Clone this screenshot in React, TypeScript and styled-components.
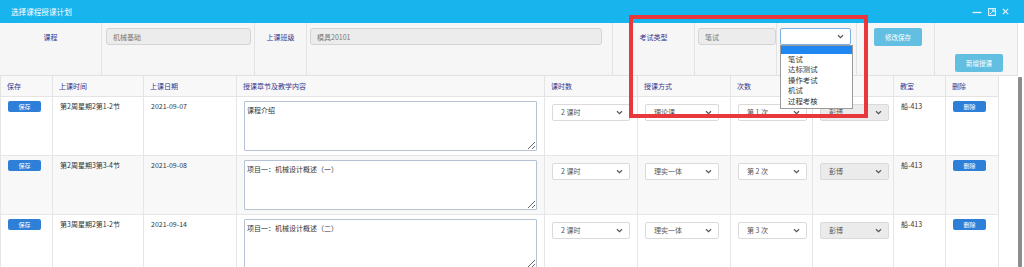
import React from 'react';
import styled, { createGlobalStyle } from 'styled-components';

const Global = createGlobalStyle`
  html, body { margin: 0; padding: 0; background: #fff; }
  body { font-family: "Noto Sans CJK SC", "Noto Sans", sans-serif; }
  * { box-sizing: border-box; }
`;

const Window = styled.div`
  position: relative;
  width: 1024px;
  height: 267px;
  overflow: hidden;
  background: #fff;
  display: flex;
  flex-direction: column;
`;

const TitleBar = styled.div`
  flex: none;
  height: 23px;
  background: #18b4ee;
  color: #fff;
  display: flex;
  align-items: center;
  justify-content: space-between;
  padding: 0 15px 0 11px;
  font-size: 7.6px;
`;

const Controls = styled.div`
  display: flex;
  align-items: center;
  gap: 6px;
`;

const Body = styled.div`
  flex: 1;
  display: flex;
  min-height: 0;
`;

const Main = styled.div`
  width: 1018px;
  display: flex;
  flex-direction: column;
`;

const ScrollCol = styled.div`
  flex: 1;
  display: flex;
  flex-direction: column;
  padding: 54px 2px 0 0;
`;

const Thumb = styled.div`
  flex: 1;
  background: #8c8c8c;
  border-radius: 1px;
`;

const Form = styled.div`
  display: grid;
  grid-template-columns: 102px 153px 52px 306px 82px 82px 80px 78px 1fr;
  grid-template-rows: 27px 25px;
  background: #f6f6f6;
  border-bottom: 1px solid #e1e1e1;
`;

const FormCell = styled.div<{ $pad?: string; $center?: boolean }>`
  position: relative;
  display: flex;
  align-items: center;
  justify-content: ${p => (p.$center ? 'center' : 'flex-start')};
  padding: ${p => p.$pad || '0'};
  border-right: 1px solid #e3e3e3;
`;

const Label = styled.span`
  font-size: 7px;
  color: #35358c;
`;

const ReadInput = styled.div`
  width: 100%;
  height: 17px;
  display: flex;
  align-items: center;
  padding-left: 6px;
  background: #ececec;
  border: 1px solid #d4d4d4;
  border-radius: 3px;
  font-size: 7px;
  color: #777;
`;

const FocusSelect = styled.div`
  position: relative;
  width: 100%;
  height: 17px;
  display: flex;
  align-items: center;
  justify-content: flex-end;
  padding-right: 6px;
  background: #fff;
  border: 1px solid #7eaedf;
  border-radius: 2px;
`;

const DropList = styled.ul`
  position: absolute;
  top: 16px;
  left: -1px;
  width: 73px;
  margin: 0;
  padding: 0 0 2px;
  list-style: none;
  background: #fff;
  border: 1px solid #9a9a9a;
  z-index: 5;
`;

const DropItem = styled.li<{ $active?: boolean }>`
  height: ${p => (p.$active ? '8px' : '10.4px')};
  line-height: 10.4px;
  padding-left: 7px;
  font-size: 7.4px;
  color: #333;
  background: ${p => (p.$active ? '#1e88f0' : 'transparent')};
`;

const InfoButton = styled.div`
  width: 48px;
  height: 18px;
  display: flex;
  align-items: center;
  justify-content: center;
  background: #62bfe2;
  border-radius: 2px;
  color: #fff;
  font-size: 6.5px;
`;

const TableArea = styled.div`
  flex: 1;
  min-height: 0;
  overflow: hidden;
`;

const Table = styled.table`
  width: 998px;
  border-collapse: collapse;
  table-layout: fixed;
`;

const Th = styled.th<{ $w: number }>`
  width: ${p => p.$w}px;
  height: 20px;
  padding: 0 6px;
  text-align: left;
  font-weight: normal;
  font-size: 7px;
  color: #35358c;
  background: #f8f8f8;
  border: 1px solid #e4e4e4;
  border-top: none;
`;

const Tr = styled.tr<{ $alt?: boolean }>`
  height: 59px;
  background: ${p => (p.$alt ? '#f8f8f8' : '#fff')};
`;

const Td = styled.td<{ $top?: number }>`
  vertical-align: top;
  padding: ${p => p.$top ?? 4}px 7px 0 7px;
  border: 1px solid #e6e6e6;
  font-size: 7px;
  line-height: 11px;
  color: #333;
`;

const SmallButton = styled.div`
  width: 33px;
  height: 11px;
  display: flex;
  align-items: center;
  justify-content: center;
  background: #2d7fd8;
  border-radius: 2px;
  color: #fff;
  font-size: 6px;
`;

const Area = styled.textarea`
  display: block;
  width: 100%;
  height: 50px;
  margin: 0;
  padding: 3px 2px;
  border: 1px solid #b4c2d4;
  border-radius: 1px;
  background: #fff;
  font-family: inherit;
  font-size: 7px;
  line-height: 10px;
  color: #333;
  resize: both;
  outline: none;
`;

const SelectBox = styled.div<{ $w: number; $disabled?: boolean }>`
  width: ${p => p.$w}px;
  height: 17px;
  display: flex;
  align-items: center;
  justify-content: space-between;
  padding: 0 6px 0 8px;
  border: 1px solid #dadada;
  border-radius: 2px;
  background: ${p => (p.$disabled ? '#ebebeb' : '#fff')};
  font-size: 7px;
  color: #555;
`;

const Annotation = styled.div`
  position: absolute;
  left: 629px;
  top: 15px;
  width: 239px;
  height: 103px;
  border: 4px solid #e8383b;
  pointer-events: none;
  z-index: 10;
`;

const Chevron = () => (
  <svg width="7" height="5" viewBox="0 0 7 5">
    <path d="M1 1.2 L3.5 3.6 L6 1.2" fill="none" stroke="#555" strokeWidth="1.2" />
  </svg>
);

const Select = ({ value, w, disabled }: { value: string; w: number; disabled?: boolean }) => (
  <SelectBox $w={w} $disabled={disabled}>
    <span>{value}</span>
    <Chevron />
  </SelectBox>
);

const rows = [
  { time: '第2周星期2第1-2节', date: '2021-09-07', content: '课程介绍', mode: '理论课', n: '第 1 次' },
  { time: '第2周星期3第3-4节', date: '2021-09-08', content: '项目一：机械设计概述（一）', mode: '理实一体', n: '第 2 次' },
  { time: '第3周星期2第1-2节', date: '2021-09-14', content: '项目一：机械设计概述（二）', mode: '理实一体', n: '第 3 次' },
];

const cols: [string, number][] = [
  ['保存', 52], ['上课时间', 91], ['上课日期', 93], ['授课章节及教学内容', 308], ['课时数', 93],
  ['授课方式', 93], ['次数', 82], ['', 81], ['教室', 52], ['删除', 53],
];

export default function App() {
  return (
    <>
      <Global />
      <Window>
        <TitleBar>
          <span>选择课程授课计划</span>
          <Controls>
            <svg width="10" height="8" viewBox="0 0 10 8">
              <path d="M0.5 4.5 H9.5" stroke="#e8f6fd" strokeWidth="1.3" />
            </svg>
            <svg width="8" height="8" viewBox="0 0 8 8">
              <rect x="0.6" y="0.6" width="6.8" height="6.8" fill="none" stroke="#e8f6fd" strokeWidth="1.1" />
              <path d="M2 6 L6 2 M3.8 2 H6 V4.2" fill="none" stroke="#e8f6fd" strokeWidth="1" />
            </svg>
            <svg width="7" height="7" viewBox="0 0 7 7">
              <path d="M0.8 0.8 L6.2 6.2 M6.2 0.8 L0.8 6.2" stroke="#e8f6fd" strokeWidth="1.2" />
            </svg>
          </Controls>
        </TitleBar>
        <Body>
          <Main>
            <Form>
              <FormCell $center><Label>课程</Label></FormCell>
              <FormCell $pad="0 3px 0 4px"><ReadInput>机械基础</ReadInput></FormCell>
              <FormCell $center><Label>上课班级</Label></FormCell>
              <FormCell $pad="0 10px 0 3px"><ReadInput>模具20101</ReadInput></FormCell>
              <FormCell $center><Label>考试类型</Label></FormCell>
              <FormCell $pad="0 0 0 3px"><ReadInput>笔试</ReadInput></FormCell>
              <FormCell $pad="0 5px 0 3px">
                <FocusSelect>
                  <Chevron />
                  <DropList>
                    <DropItem $active />
                    <DropItem>笔试</DropItem>
                    <DropItem>达标测试</DropItem>
                    <DropItem>操作考试</DropItem>
                    <DropItem>机试</DropItem>
                    <DropItem>过程考核</DropItem>
                  </DropList>
                </FocusSelect>
              </FormCell>
              <FormCell $pad="0 0 0 17px"><InfoButton>修改保存</InfoButton></FormCell>
              <FormCell />
              <FormCell />
              <FormCell />
              <FormCell />
              <FormCell />
              <FormCell />
              <FormCell />
              <FormCell />
              <FormCell />
              <FormCell $pad="0 0 0 20px"><InfoButton>新增授课</InfoButton></FormCell>
            </Form>
            <TableArea>
              <Table>
                <thead>
                  <tr>
                    {cols.map(([t, w], i) => (
                      <Th key={i} $w={w}>{t}</Th>
                    ))}
                  </tr>
                </thead>
                <tbody>
                  {rows.map((r, i) => (
                    <Tr key={i} $alt={i === 1}>
                      <Td><SmallButton>保存</SmallButton></Td>
                      <Td>{r.time}</Td>
                      <Td>{r.date}</Td>
                      <Td><Area defaultValue={r.content} readOnly /></Td>
                      <Td $top={7}><Select value="2 课时" w={78} /></Td>
                      <Td $top={7}><Select value={r.mode} w={74} /></Td>
                      <Td $top={7}><Select value={r.n} w={69} /></Td>
                      <Td $top={7}><Select value="彭博" w={69} disabled /></Td>
                      <Td>船-413</Td>
                      <Td><SmallButton>删除</SmallButton></Td>
                    </Tr>
                  ))}
                </tbody>
              </Table>
            </TableArea>
          </Main>
          <ScrollCol><Thumb /></ScrollCol>
        </Body>
        <Annotation />
      </Window>
    </>
  );
}
